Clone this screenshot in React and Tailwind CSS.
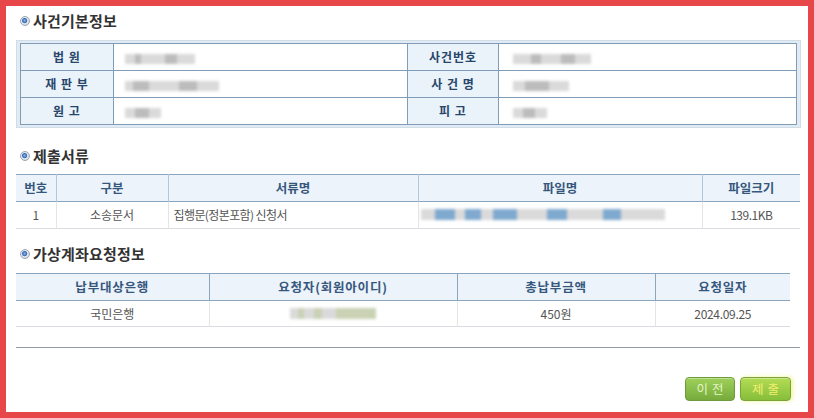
import React from 'react';

const font = { fontFamily: '"Noto Sans CJK KR", "Noto Sans", sans-serif' };

function Bullet() {
  return (
    <span className="inline-block w-[10px] h-[10px] rounded-full border border-[#9aa6b4] bg-[radial-gradient(circle_at_45%_45%,#8fb4e6_0%,#3c6db8_34%,#e6ebf1_50%,#b3bdc9_100%)] mr-[3px]" />
  );
}

function SectionTitle({ children, className = '' }) {
  return (
    <div className={`flex items-center h-[18px] pl-[4px] ${className}`}>
      <Bullet />
      <span className="text-[15px] leading-[18px] font-bold text-[#333] tracking-[0.2px]">{children}</span>
    </div>
  );
}

// blurred placeholder for masked values
function Masked({ parts, color = '#bcbcbc', h = 10 }) {
  return (
    <span className="inline-flex items-center blur-[1.6px]">
      {parts.map((w, i) => (
        <span key={i} style={{ width: w, height: h, background: i % 2 ? color : '#dadada' }} />
      ))}
    </span>
  );
}

const infoRows = [
  { l1: '법 원', v1: [10, 6, 24, 12, 18], l2: '사건번호', v2: [18, 10, 20, 14, 16] },
  { l1: '재 판 부', v1: [8, 16, 30, 18, 22], l2: '사 건 명', v2: [12, 24, 20] },
  { l1: '원 고', v1: [10, 14, 12], l2: '피 고', v2: [10, 12, 12] },
];

export default function App() {
  return (
    <div style={font} className="w-[814px] h-[418px] box-border border-[6px] border-[#e8474a] bg-white overflow-hidden">
      <div className="flex flex-col px-[10px] pt-[6px]">
        <SectionTitle>사건기본정보</SectionTitle>

        {/* 사건기본정보 */}
        <div className="mt-[10px] w-[785px] border border-[#cfdde9] bg-[#e2ebf4] px-[3px] py-[2px]">
          <table className="w-full border-collapse border border-[#7f9db6] table-fixed">
            <colgroup>
              <col className="w-[93px]" />
              <col className="w-[294px]" />
              <col className="w-[91px]" />
              <col />
            </colgroup>
            <tbody>
              {infoRows.map((r, i) => (
                <tr key={i} className="h-[27px]">
                  <td className="border border-[#7f9db6] bg-[#eaf2fa] text-center text-[12px] font-bold text-[#27466a] tracking-[1px]">{r.l1}</td>
                  <td className="border border-[#7f9db6] bg-white pl-[11px]"><Masked parts={r.v1} /></td>
                  <td className="border border-[#7f9db6] bg-[#eaf2fa] text-center text-[12px] font-bold text-[#27466a] tracking-[1px]">{r.l2}</td>
                  <td className="border border-[#7f9db6] bg-white pl-[14px]"><Masked parts={r.v2} /></td>
                </tr>
              ))}
            </tbody>
          </table>
        </div>

        <SectionTitle className="mt-[19px]">제출서류</SectionTitle>

        {/* 제출서류 */}
        <table className="mt-[9px] w-[784px] border-collapse table-fixed">
          <colgroup>
            <col className="w-[40px]" />
            <col className="w-[112px]" />
            <col className="w-[250px]" />
            <col className="w-[284px]" />
            <col />
          </colgroup>
          <thead>
            <tr className="h-[27px] bg-[#ecf3fa] border-t border-b border-[#8aa5be]">
              {['번호', '구분', '서류명', '파일명', '파일크기'].map((h, i) => (
                <th key={h} className={`text-[12.5px] font-bold text-[#36577d] ${i > 0 ? 'border-l border-[#b3c7d8]' : ''}`}>{h}</th>
              ))}
            </tr>
          </thead>
          <tbody>
            <tr className="h-[27px] border-b border-[#d9dde1] text-[12px] text-[#555]">
              <td className="text-center">1</td>
              <td className="text-center border-l border-[#e2e4e6]">소송문서</td>
              <td className="pl-[5px] border-l border-[#e2e4e6] tracking-[-0.6px]">집행문(정본포함) 신청서</td>
              <td className="pl-[2px] border-l border-[#e2e4e6]">
                <Masked parts={[14, 20, 10, 16, 12, 24, 30, 20, 36, 18, 44]} color="#7fa9cf" h={11} />
              </td>
              <td className="text-center border-l border-[#e2e4e6] tracking-[-0.5px]">139.1KB</td>
            </tr>
          </tbody>
        </table>

        <SectionTitle className="mt-[16px]">가상계좌요청정보</SectionTitle>

        {/* 가상계좌요청정보 */}
        <table className="mt-[10px] w-[774px] border-collapse table-fixed">
          <colgroup>
            <col className="w-[193px]" />
            <col className="w-[248px]" />
            <col className="w-[198px]" />
            <col />
          </colgroup>
          <thead>
            <tr className="h-[27px] bg-[#ecf3fa] border-t border-b border-[#8aa5be]">
              {['납부대상은행', '요청자(회원아이디)', '총납부금액', '요청일자'].map((h, i) => (
                <th key={h} className={`text-[12.5px] font-bold text-[#36577d] tracking-[0.8px] ${i > 0 ? 'border-l border-[#8aa5be]' : ''}`}>{h}</th>
              ))}
            </tr>
          </thead>
          <tbody>
            <tr className="h-[26px] border-b border-[#d9dde1] text-[12px] text-[#555]">
              <td className="text-center">국민은행</td>
              <td className="text-center border-l border-[#e2e4e6]">
                <Masked parts={[8, 6, 10, 8, 14, 40]} color="#c9d2b4" h={11} />
              </td>
              <td className="text-center border-l border-[#e2e4e6]">450원</td>
              <td className="text-center border-l border-[#e2e4e6] tracking-[-0.3px]">2024.09.25</td>
            </tr>
          </tbody>
        </table>

        <div className="mt-[20px] w-[784px] h-px bg-[#8d9ba8]" />

        <div className="mt-[29px] w-[775px] flex justify-end gap-[5px]">
          <button className="w-[50px] h-[24px] rounded-[4px] border border-[#6d9a3a] bg-gradient-to-b from-[#9fd05a] to-[#76ab3c] text-[12.5px] text-[#e4f5c4] tracking-[4px] pl-[4px] shadow-[inset_0_1px_0_rgba(255,255,255,0.35)]">
            이전
          </button>
          <button className="w-[51px] h-[24px] rounded-[4px] border border-[#7aa43a] bg-gradient-to-b from-[#b4dc55] to-[#86be3a] text-[12.5px] text-[#f3ef6e] tracking-[4px] pl-[4px] shadow-[inset_0_1px_0_rgba(255,255,255,0.35),2px_0_4px_rgba(230,240,80,0.6)]">
            제출
          </button>
        </div>
      </div>
    </div>
  );
}
